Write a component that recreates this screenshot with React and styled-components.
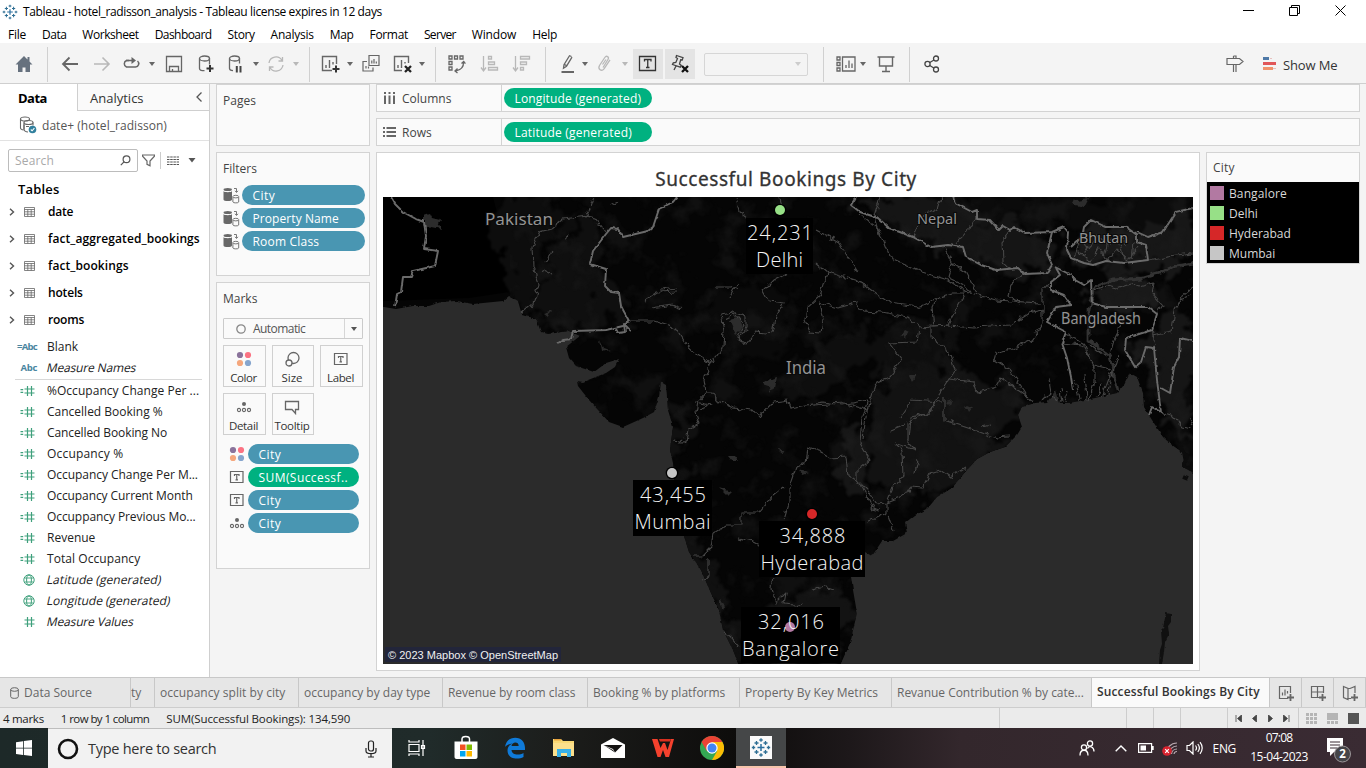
import React, { useLayoutEffect, useRef, useState } from "react";
import styled, { createGlobalStyle, css } from "styled-components";

const ui = `"Open Sans", "Noto Sans", sans-serif`;

const Global = createGlobalStyle`
  * { box-sizing: border-box; }
  html, body { margin: 0; padding: 0; }
  body { width: 1366px; height: 768px; overflow: hidden; font-family: ${ui}; font-size: 12px; color: #222; }
  svg { display: block; flex: none; }
`;

/* ---------- text that tracks itself to a given width ---------- */
const TextSpan = styled.span`
  display: inline-block;
  flex: none;
  white-space: pre;
  padding-top: 1px;
  font-size: ${(p) => p.$size || 12}px;
  font-weight: ${(p) => p.$weight || 400};
  color: ${(p) => p.$color || "inherit"};
  line-height: 16px;
  ${(p) => p.$slanted && css`transform: skewX(-12deg);`}
`;

function Text({ w, children, size, weight, slanted, color }) {
  const ref = useRef(null);
  const [track, setTrack] = useState(0);
  useLayoutEffect(() => {
    if (!w) return;
    const natural = ref.current.offsetWidth;
    setTrack((w - natural) / String(children).length);
  }, [w, children]);
  return (
    <TextSpan ref={ref} style={{ letterSpacing: track }} $size={size} $weight={weight} $slanted={slanted} $color={color}>
      {children}
    </TextSpan>
  );
}

/* ---------- icons ---------- */
const G = "#666";
const L = "#b8b8b8";
const Svg = ({ w = 20, h = 20, children, ...r }) => (
  <svg width={w} height={h} viewBox={`0 0 ${w} ${h}`} fill="none" stroke={G} strokeWidth="1.3" {...r}>
    {children}
  </svg>
);
const Plus = ({ x, y }) => <path d={`M${x - 3.5} ${y}h7M${x} ${y - 3.5}v7`} stroke="#333" strokeWidth="2" />;
const Cross = ({ x, y, c = "#222" }) => (
  <path d={`M${x - 3} ${y - 3}l6 6m0-6l-6 6`} stroke={c} strokeWidth="2.3" />
);
const Caret = ({ c = G, s = 6 }) => (
  <svg width={s} height="4" viewBox="0 0 6 4"><path d="M0 0h6L3 4z" fill={c} /></svg>
);

const icons = {
  home: (
    <Svg stroke="none" fill="#66717e"><path d="M10 2L1.5 10.5H4V18h4.500v-4.500h3V18H16v-7.500h2.500L15.500 7.400V3h-2v2.500z" /></Svg>
  ),
  back: <Svg strokeWidth="1.8"><path d="M18 10H3M9.500 3.500L3 10l6.500 6.500" /></Svg>,
  forward: <Svg stroke={L} strokeWidth="1.6"><path d="M2 10h15M10.500 3.500L17 10l-6.500 6.500" /></Svg>,
  replay: <Svg strokeWidth="1.500"><path d="M8 6.500H5.500a3.500 3.500 0 0 0 0 6.500h9a3.400 3.400 0 0 0 2-6" /><path d="M5 6.500h7" /><path d="M10.500 3l4.500 3.500-4.500 3.500z" fill={G} stroke="none" /></Svg>,
  save: <Svg><path d="M2.500 2.500h15v15h-15zM5.500 17.500v-5h9v5M8.500 15v2.500" /></Svg>,
  dbAdd: <Svg><ellipse cx="8.500" cy="4.500" rx="5" ry="2.500" /><path d="M3.500 4.500v10c0 1.300 2 2.200 5 2.200M13.500 4.500v6" /><Plus x={14} y={14.500} /></Svg>,
  dbPause: <Svg><ellipse cx="8.500" cy="4.500" rx="5" ry="2.500" /><path d="M3.500 4.500v10c0 1.300 1.300 2 3.500 2.200M13.500 4.500v5" /><path d="M10.800 12v6.500M14.500 12v6.500" stroke="#444" strokeWidth="2" /></Svg>,
  refresh: <Svg stroke={L}><path d="M3 9a7 7 0 0 1 13-2.500M17 11a7 7 0 0 1-13 2.500M16.500 3v4h-4M3.500 17v-4h4" /></Svg>,
  sheetAdd: <Svg><path d="M11 16.500H1.500v-14h14V10M5 14v-3M8.500 14V6M12 10.500V8" strokeWidth="1.400" /><Plus x={15} y={15} /></Svg>,
  duplicate: <Svg><path d="M8 1.500h10v10H8zM6 7.500H2v9.500h10v-3.500M5 14.500V12M7.500 14.500v-2M10.800 9.500v-3M13 9.500V5M15.300 9.500v-2" strokeWidth="1.200" /></Svg>,
  clear: <Svg><path d="M9 16.500H1.500v-14h14V9M5 14v-3M8.500 14V6M12 9.500V8" strokeWidth="1.400" /><Cross x={15} y={15} /></Svg>,
  swap: <Svg><path d="M2 2h3v3H2zM7.500 2h3v3h-3zM13 2h3v3h-3zM2 7.500h3v3H2zM2 13h3v3H2zM16.500 8c.3 5-2.500 8-8 9M14.500 9.500l2.200-2 1.700 2.200M10.500 14.500L8 17l2.500 2" /></Svg>,
  sortAsc: <Svg stroke={L}><path d="M3.500 2v14M1 13.500L3.500 17 6 13.500M8.500 2.500h3v2.500h-3zM8.500 8h6v2.500h-6zM8.500 13.500h9V16h-9z" /></Svg>,
  sortDesc: <Svg stroke={L}><path d="M3.500 2v14M1 13.500L3.500 17 6 13.500M8.500 2.500h9V5h-9zM8.500 8h6v2.500h-6zM8.500 13.500h3V16h-3z" /></Svg>,
  pen: <Svg><path d="M13.500 2.500l-2-.8-5.500 9-.5 3.500 3-2 5.500-9M6.300 10.200l2.300 1.600" /><path d="M3.500 18h12.500" strokeWidth="2" /></Svg>,
  clip: <Svg stroke={L}><path d="M8 13.500l5-8c1.500-2.500-1.500-4.500-3.200-2L4.500 11.500c-2 3.500 2 6.500 4.500 3.300l6-9M7.500 10.500l3.500-5" /></Svg>,
  text: <Svg stroke="#333"><path d="M1.500 2.500h16v14h-16zM6.500 7.500v-2h6.500v2M9.750 5.500v8M8 13.500h3.500" /></Svg>,
  pin: <Svg stroke="#444"><path d="M6.500 1.500l6.500 2.200-.8 2.300-1.500-.2-1.200 4.200 1.800 1.500-1 1.700L2.500 10.500l.8-1.600 2.500-.4L7.500 4.500 6 3.500zM6 12L4 16" /><Cross x={15} y={15} c="#111" /></Svg>,
  cards: <Svg><path d="M1 3h3v3H1zM1 8.500h3v3H1zM1 14h3v3H1zM6.500 3H19v14H6.500zM10 14v-3M13 14V6.500M16 14V9.500" /></Svg>,
  present: <Svg><path d="M1.500 3h17M3.500 3.500v8.500h13V3.500M10 12v5M6 17.500h8" strokeWidth="1.400" /></Svg>,
  share: <Svg stroke="#444"><circle cx="5.500" cy="10" r="2.600" /><circle cx="14" cy="4.500" r="2.500" /><circle cx="14" cy="15.500" r="2.500" /><path d="M7.800 8.500L12 6M7.800 11.500l4 2.500" /></Svg>,
  guide: <Svg><path d="M2 4.500h12.500L18 7.500l-3.500 3H2v-6zM8.500 2v2.500M8.500 10.500V18M11 10.500V18M8.500 2H11v2.500" strokeWidth="1.200" /></Svg>,
  showme: (
    <svg width="16" height="16" viewBox="0 0 16 16"><path d="M1 1h6v3H1z" fill="#4e79a7" /><path d="M1 6h13v3H1z" fill="#e15759" /><path d="M1 11h10v3H1z" fill="#f0926b" /><path d="M8 2.500h2M11 12.500h3" stroke="#e8c1bf" /></svg>
  ),
};

const toolbar = [
  ["home", 14], ["sep", 13], ["back", 12], ["forward", 12], ["replay", 9], ["caret", 8], ["save", 9], ["dbAdd", 12],
  ["dbPause", 10], ["caret", 7], ["refresh", 7], ["caretOff", 7], ["sep", 10], ["sheetAdd", 11], ["caret", 6],
  ["duplicate", 8], ["clear", 12], ["caret", 6], ["sep", 10], ["swap", 11], ["sortAsc", 13], ["sortDesc", 12],
  ["sep", 13], ["pen", 12], ["caret", 4], ["clip", 7], ["caretOff", 7], ["text", 5, 1], ["pin", 2, 1], ["select", 9],
  ["sep", 15], ["cards", 12], ["caret", 4], ["present", 10], ["sep", 13], ["share", 12], ["guide", 283], ["showme", 17],
];

/* ---------- window frame ---------- */
const Window = styled.div`width: 1366px; height: 768px; display: flex; flex-direction: column; background: #f4f4f4; overflow: hidden;`;
const TitleBar = styled.header`height: 23px; flex: none; background: #fff; display: flex; align-items: center; padding-left: 2px; gap: 5px; color: #000;`;
const WindowButtons = styled.div`margin-left: auto; display: flex; gap: 35px; padding: 0 20px 2px 0; align-items: center;`;
const MenuBar = styled.nav`height: 20px; flex: none; background: #fff; display: flex; gap: 16px; padding: 2px 0 0 8px; align-items: center; color: #000;`;
const ToolBar = styled.div`height: 41px; flex: none; display: flex; align-items: center; padding-top: 2px; background: #f4f4f4; border-bottom: 1px solid #cfcfcf;`;
const Tool = styled.div`
  margin-left: ${(p) => p.$gap}px; display: flex; align-items: center; justify-content: center; flex: none;
  ${(p) => p.$on && css`width: 30px; height: 30px; background: #e4e4e4;`}
`;
const ToolRule = styled.i`margin-left: ${(p) => p.$gap}px; width: 1px; height: 35px; background: #d0d0d0; flex: none;`;
const FitSelect = styled.div`
  margin-left: ${(p) => p.$gap}px; width: 104px; height: 23px; flex: none; border: 1px solid #d6d6d6; border-radius: 2px;
  display: flex; align-items: center; justify-content: flex-end; padding-right: 5px;
`;
const ShowMe = styled.div`margin-left: 5px; display: flex;`;

/* ---------- data pane ---------- */
const Body = styled.div`height: 593px; flex: none; display: flex;`;
const DataPane = styled.aside`width: 210px; flex: none; background: #fff; border-right: 1px solid #cfcfcf;`;
const PaneTabs = styled.div`height: 27px; display: flex;`;
const PaneTab = styled.div`
  height: 27px; display: flex; align-items: center; color: ${(p) => (p.$active ? "#000" : "#333")};
  ${(p) => p.$active
    ? css`width: 77px; padding-left: 18px;`
    : css`flex: 1; padding: 0 7px 0 12px; justify-content: space-between; background: #fafafa; border-left: 1px solid #cfcfcf; border-bottom: 1px solid #cfcfcf;`}
`;
const SourceRow = styled.div`height: 30px; display: flex; align-items: center; padding: 0 0 1px 19px; gap: 5px; border-bottom: 1px solid #e2e2e2;`;
const SearchRow = styled.div`display: flex; align-items: center; height: 23px; margin: 8px 0 0 8px;`;
const SearchBox = styled.div`
  width: 130px; height: 23px; border: 1px solid #bcbcbc; border-radius: 2px; display: flex; align-items: center;
  justify-content: space-between; padding: 0 6px; margin-right: 4px;
`;
const SearchRule = styled.i`width: 1px; height: 17px; background: #ccc; margin: 0 6px 0 5px;`;
const TablesTitle = styled.div`height: 26px; padding: 6px 0 0 18px; display: flex; align-items: center; color: #000;`;
const TableRow = styled.div`height: 27px; display: flex; align-items: center; color: #000; padding-left: 9px;`;
const TableIcon = styled.div`margin: 1px 13px 0 9px;`;
const FieldList = styled.div`${(p) => p.$top && css`padding-top: ${p.$top}px;`}`;
const FieldRow = styled.div`height: 21px; display: flex; align-items: center; color: #222;`;
const FieldIcon = styled.div`width: 47px; flex: none; display: flex; justify-content: flex-end; padding-right: ${(p) => p.$end}px; color: #4a86a0;`;
const FieldRule = styled.hr`margin: 1px 7px 0 15px; border: 0; border-top: 1px solid #d8d8d8;`;

const Chevron = () => (
  <svg width="6" height="8" viewBox="0 0 6 8" fill="none" stroke="#555" strokeWidth="1.4"><path d="M1 .8L4.500 4 1 7.200" /></svg>
);
const Grid = () => (
  <svg width="11" height="10" viewBox="0 0 11 10" fill="none" stroke="#666"><path d="M.5.500h10v9H.5zM.5 2.500h10M.5 4.800h10M.5 7.200h10M3.800 2.500v7M7.200 2.500v7" strokeWidth=".8" /></svg>
);
const Hash = ({ calc }) => (
  <svg width="15" height="12" viewBox="0 0 15 12" fill="none" stroke="#3fa07c" strokeWidth="1.2">
    <path d="M7.500 1v10M11.500 1v10M4.500 4h10M4.500 8h10" />{calc && <path d="M.5 4.700h2.700M.5 7.300h2.700" />}
  </svg>
);
const Globe = () => (
  <svg width="12" height="12" viewBox="0 0 12 12" fill="none" stroke="#3fa07c"><circle cx="6" cy="6" r="5.200" /><ellipse cx="6" cy="6" rx="2.400" ry="5" /><path d="M1.500 4h9M1.500 8h9" strokeWidth=".9" /></svg>
);

const tables = [["date", 25], ["fact_aggregated_bookings", 152], ["fact_bookings", 81], ["hotels", 35], ["rooms", 36]];
const measures = [
  ["%Occupancy Change Per ...", 152, "calc"], ["Cancelled Booking %", 116, "calc"], ["Cancelled Booking No", 120, "calc"],
  ["Occupancy %", 76, "calc"], ["Occupancy Change Per M...", 151, "calc"], ["Occupancy Current Month", 146, "calc"],
  ["Occuppancy Previous Mo...", 149, "calc"], ["Revenue", 48, "calc"], ["Total Occupancy", 93, "calc"],
  ["Latitude (generated)", 114, "geo"], ["Longitude (generated)", 124, "geo"], ["Measure Values", 87, "num"],
];

/* ---------- shelves ---------- */
const Shelves = styled.section`width: 154px; margin-left: 6px; flex: none; display: flex; flex-direction: column; gap: 6px;`;
const Card = styled.div`height: ${(p) => p.$h}px; background: #fafafa; border: 1px solid #d3d3d3; padding: 0 0 0 6px; color: #444;`;
const CardTitle = styled.div`height: 30px; display: flex; align-items: center;`;
const PillRow = styled.div`display: flex; align-items: center; height: 20px; margin-bottom: 3px; gap: ${(p) => p.$gap}px; padding-left: ${(p) => p.$left || 0}px;`;
const Pill = styled.div`
  width: ${(p) => p.$w}px; height: 20px; border-radius: 10px; background: ${(p) => (p.$green ? "#00b180" : "#4996b2")};
  display: flex; align-items: center; padding-left: 10.500px; color: #fff; flex: none;
`;
const FilterPills = styled.div`padding-top: 2px;`;
const MarkType = styled.div`width: 140px; height: 21px; margin-top: 5px; border: 1px solid #cbcbcb; border-radius: 1px; display: flex; align-items: center; color: #555; padding-left: 12px; gap: 7px;`;
const MarkArrow = styled.div`margin-left: auto; width: 18px; height: 19px; border-left: 1px solid #d6d6d6; display: flex; align-items: center; justify-content: center;`;
const MarkGrid = styled.div`display: grid; grid-template-columns: 43px 42px 43px; column-gap: 6px; row-gap: 6px; margin-top: 6px;`;
const MarkButton = styled.div`
  height: 42px; border: 1px solid #d0d0d0; display: flex; flex-direction: column; align-items: center; justify-content: space-between;
  padding: 5px 2px 0 0; color: #333;
`;
const MarkPills = styled.div`padding-top: 9px;`;

const ColorDots = () => (
  <svg width="16" height="16" viewBox="0 0 16 16"><circle cx="4" cy="4" r="3.100" fill="#8a739b" /><circle cx="12" cy="4" r="3.100" fill="#fb7383" /><circle cx="4" cy="12" r="3.100" fill="#f5a77d" /><circle cx="12" cy="12" r="3.100" fill="#86a5cd" /></svg>
);
const SizeIcon = () => <Svg w={16} h={16}><circle cx="9.500" cy="7" r="5.500" /><circle cx="5" cy="12" r="3" fill="#fafafa" /></Svg>;
const LabelIcon = () => <Svg w={16} h={16}><path d="M1.500 2.500H14v11H1.500zM5.500 7V5.500H10V7M7.750 5.500v5.300M6.500 10.800H9" strokeWidth="1.200" /></Svg>;
const DetailIcon = () => <Svg w={16} h={16} strokeWidth="1.100"><circle cx="8" cy="5" r="2" fill={G} stroke="none" /><circle cx="3" cy="11" r="1.600" /><circle cx="8" cy="11" r="1.600" /><circle cx="13" cy="11" r="1.600" /></Svg>;
const TooltipIcon = () => <Svg w={16} h={16}><path d="M1.500 2.500h13v8h-3v4L8 10.500H1.500z" /></Svg>;
const ContextFilter = () => (
  <svg width="17" height="17" viewBox="0 0 17 17" fill="none" stroke="#777">
    <path d="M.5 4v8.500c0 2 8.500 2 8.500 0V4c0 1.600-8.500 1.600-8.500 0z" fill="#686868" stroke="none" /><ellipse cx="4.750" cy="2.600" rx="4.200" ry="1.500" fill="#686868" stroke="none" />
    <path d="M9.900 10v5c0 1.200 5.800 1.200 5.800 0v-5M11 1.500h2.500v3.500M12 3.800l1.500 1.700L15 3.800" /><ellipse cx="12.800" cy="9.600" rx="2.900" ry="1.300" />
  </svg>
);

/* ---------- worksheet ---------- */
const Work = styled.main`width: 984px; margin-left: 6px; flex: none;`;
const Shelf = styled.div`height: 28px; margin-bottom: 6px; background: #fafafa; border: 1px solid #d3d3d3; display: flex; color: #444;`;
const ShelfName = styled.div`width: 125px; border-right: 1px solid #d3d3d3; display: flex; align-items: center; gap: 6px; padding-left: 6px;`;
const ShelfPills = styled.div`padding: 3px 0 0 2px;`;
const SheetRow = styled.div`display: flex; gap: 6px; align-items: flex-start;`;
const Sheet = styled.div`width: 824px; height: 519px; background: #fff; border: 1px solid #d3d3d3; padding-left: 6px;`;
const SheetTitle = styled.div`height: 44px; width: 806px; padding-top: 6px; display: flex; align-items: center; justify-content: center; color: #333; font-family: "Noto Sans", "Open Sans", sans-serif; -webkit-text-stroke: 0.300px #333;`;
const Legend = styled.div`width: 154px; height: 112px; background: #000; border: 1px solid #d3d3d3;`;
const LegendTitle = styled.div`height: 29px; background: #fafafa; color: #444; padding-left: 6px; display: flex; align-items: center; margin-bottom: 1px;`;
const LegendRow = styled.div`height: 20px; display: flex; align-items: center; gap: 5px; padding-left: 3px; color: #d8d8d8;`;
const Swatch = styled.i`width: 14px; height: 14px; background: ${(p) => p.$c};`;

const LAND =
  "M370 180V307L384 307 396 309 413 306 429 306 441 302 456 301 473 304 503 301 509 296 518 301 522 315 536 319 541 332 548 334 569 331 580 336 566 347 569 358 576 366 594 372 606 363 619 359 615 367 606 373 583 382 577 381 578 386 589 400 609 422 623 427 643 418 654 412 659 397 661 382 666 385 668 410 673 427 670 450 673 463 674 477 679 510 684 536 689 552 701 570 711 593 719 610 723 630 733 650 741 670 H838 L850 643 857 613 853 590 851 577 858 560 865 552 872 556 882 541 893 541 907 533 905 523 915 515 928 508 937 497 952 488 965 472 977 459 990 452 1005 447 1017 435 1022 427 1018 415 1022 407 1035 403 1047 402 1056 390 1060 403 1069 403 1095 398 1117 393 1124 385 1130 373 1137 377 1143 393 1144 407 1152 420 1163 437 1172 445 1182 452 1185 467 1200 480V180Z";

const shades = [
  ["M497 197l45 0 44 20-38 15-14 30 6 34-16 20-20-20 4-40-14-20z", "#0d0d0d"],
  ["M560 232l36-10 12 15-16 22 14 25 24 37-60 10-40-10z", "#0f0f0f"],
  ["M860 197h92l26 22 74 12-4 42-40-4-60-20-90-42z", "#151515"],
  ["M1068 250l22-26 36 4 22 30-70 8z", "#191919"],
  ["M953 197h240v14l-28 20-27 4-14-10-35-4-30 6-80-8z", "#0b0b0b"],
  ["M1137 238l56-30v56l-100 22 0-20 54-6z", "#171717"],
  ["M1092 284l56-6 12 26-12 8-56-8z", "#191919"],
  ["M1152 332l28-22 13 30v100l-28-12-10-50-28-14z", "#161616"],
  ["M890 344l45-4 20 30 45 12 25 20-20 40-40 38-35 14-50-10-20-40 20-40z", "#121212"],
  ["M770 380l60-40 80-20 60 10-30 30-80 8-40 30z", "#0e0e0e"],
  ["M671 398l16 24-2 60 12 60 30 60 22 62h-12l-24-50-24-50-18-60z", "#101010"],
  ["M700 300l60-16 40 30-20 40-40 10-30-30z", "#0a0a0a"],
  ["M780 600l66-16 6 40-30 40h-50z", "#131313"],
  ["M845 420l18 20 6 50-14 20-16-40z", "#161616"],
];

const borders = [
  "M391 197L395 204 403 212 416 219 424 222 426 236 424 249 438 251 435 266 413 271 411 277 403 277 401 292 397 294 395 307",
  "M677 197L673 202 659 209 653 227 648 231 623 237 618 229 611 228 606 234 593 251 590 264 606 269 605 286 611 292 619 293 621 306 629 321 623 326 606 330 573 331 571 339 563 340 558 343",
  "M616 329l2 4 7-1-1-8 7 7",
  "M856 197L851 205 860 212 878 218 889 228 913 237 931 247 948 245 963 247 966 257 981 265 996 270 1018 268 1025 274 1047 273 1052 265 1047 253 1052 232",
  "M953 197L955 203 972 212 977 210 977 219 990 220 999 230 1003 226 1010 230 1014 227 1025 233 1052 232 1064 227 1068 232 1067 250 1071 258 1084 263 1093 265 1106 261 1124 263 1148 260 1146 245 1137 242 1137 235 1126 227 1106 227 1091 220 1084 227 1082 237 1071 247",
  "M1137 232L1148 237 1163 232 1176 212 1193 208",
  "M1055 267L1071 275 1075 280 1084 285 1091 280 1092 303 1106 307 1148 307 1157 314 1152 330 1126 338 1125 350 1135 367 1141 362 1146 347 1154 348 1157 380 1161 412 1152 407 1149 415",
  "M1161 388L1170 393 1174 367 1179 357 1180 338 1193 341",
  "M1056 268L1060 275 1051 282 1051 290 1064 295 1071 305 1056 307 1047 322 1066 332 1062 343 1067 358 1071 377 1073 390",
];

const states = [
  "M594 197L589 211 586 217 596 219 606 232M588 216L563 219 551 229 539 232 532 247 533 267 539 284 533 304 521 314",
  "M629 321L653 321 669 326 678 331 686 344 699 356 711 364 723 347 724 331 721 314 733 312 746 317 746 329 738 339 746 344 756 332 773 334 776 317 784 304 769 302 763 291 773 281 788 273",
  "M726 318l8-4 10 12-6 10M736 197L739 212 746 217M779 197l2 8",
  "M711 360L704 380 706 393 698 402 696 413 699 423 688 430 686 442 673 440M684 438l-6 5 8 0M696 402l14 3-10 4",
  "M706 393L713 393 716 400 733 408 753 410 759 417 773 402 788 400 791 408 806 405 823 402 843 405 867 400",
  "M808 448L823 453 831 458 846 457 848 475 856 480M808 448L806 463 796 467 789 487 789 503 784 520M784 487L774 495 759 513 741 513 741 525 726 525 713 533 711 547 701 557 693 557M708 557L708 577 702 579",
  "M773 577L771 588 776 603 786 593 784 604 796 605 803 603M724 632L732 638 739 647M812 590l12-3 12 2M738 538l14 4 8 4",
  "M816 230L838 242 858 272M858 213L878 228 889 257 922 272 948 280 966 292 996 300 1040 303M944 247L952 263 948 277 964 285 970 292M952 263L966 272 977 292",
  "M816 263L827 272 819 297 808 307 805 320 810 332 821 333 823 320 819 303M827 272L863 283 889 303 919 307 937 298 952 293 966 293 952 317 948 325 974 327 1010 325 1029 313 1043 310",
  "M937 298l-5 10 2 18 14-1M1025 272l-14 12-2 12 12 8M1053 279l-10 12 0 12M1043 303L1043 323 1032 340 1015 348 996 353 994 360 1010 370 1025 393 1032 402",
  "M819 303L838 308 856 303 862 311 882 312 908 317 919 327 917 342 889 343 902 360 889 377 876 383 867 410 845 403 812 405M919 327l29-2M931 327l0 10L948 350 955 370 948 380 937 397 930 413 911 417 909 439",
  "M948 380L974 383 977 392 996 387 1001 378 1029 397M944 397L944 420 974 430 996 438 1008 437M867 410L863 439M910 400l32 2M910 400",
  "M867 400L862 417 860 443 870 460 857 470 857 480 870 493 875 503 887 502 893 488 903 477 902 450 895 443 915 450 908 443 908 423 922 415 932 410 933 400",
  "M857 480l10 16 6 12 8 2M887 502L905 495 910 487 923 488 930 473 940 470 950 477 965 468M887 503L887 513 867 522M888 515L893 530",
  "M913 237l8-20 16-8 4-12M955 245l12-14 8-14M1010 231l-8 10 1 20 8 8M880 197l-6 20 6 20",
  "M1074 257l6-15 10 6 8-12 10 8 12-10 8 12M1078 250l12 12 8-14 10 13 8-12 12 10 10-12",
  "M1090 245l-6 12M1108 240l-4 18M1120 245l4 14M1133 243l-2 16",
  "M1148 260l20-4 25-3M1095 290l12-4 10 3 14-5 8 3 15-4M1154 283l-2 10 11 12-6 9M1193 287l-10 8-8 14-3 22-20 4M1180 300l10-4M1152 330l4 18M1161 412l10 3 12 12 10 2",
  "M1066 335l18 8 10 25M1062 343l20 2 12 20 0 22M1110 355l4-15 10-20M1118 355l-6 20M1094 365l16 4M1112 370l-10 28M1090 345l16 12",
  "M1048 380l2 12-8 8M1052 395l6 6M1060 388l2 14M1067 392l-2 10M1075 380l4 20M1085 375l2 24M1095 380l-6 20M1102 384l-4 14M1110 380l-2 14",
  "M645 300l12-8 20-1M652 308l20-3 10 4M660 290l16-2M715 287l16 0 8-3M729 298l6-12 4 2M610 205l8-4M566 240l2-6M554 250l-8 12M542 270l10 5",
  "M1190 418l3 8M905 425l-14 6M900 418l10-15M990 424l-8 2M918 460l-3 12",
];

const lakes = [
  "M424 216l6-2 2 4 8 2-2 3 4 6-10-2-8 2z", "M764 384l6-5 6-2-2 10-4 6-1-6-6-1z", "M728 456l6 0 4 5-6 0z", "M720 488l12 4-4 4z",
  "M905 330l4 2-4 6-5-2z", "M730 320l8-2 4 10-6 6z", "M1076 200l12-2-4 8-10-2z", "M600 340l4 8 6 2-8 2z", "M720 600l6 6-2 4-4-4z",
  "M964 405l8 3-4 5z", "M945 402l6-2-2 6z", "M910 375l6 0-3 6z", "M780 448l6 4-5 1z", "M544 314l10-3-6 6z", "M800 470l8 4-6 2z",
];

const marks = [
  { x: 780, y: 210, c: "#97e087", bx: 746, by: 218, bw: 67, n: "24,231", nw: 66, city: "Delhi", cw: 47 },
  { x: 672, y: 473, c: "#c6c6c6", bx: 633, by: 480, bw: 79, n: "43,455", nw: 66, city: "Mumbai", cw: 76 },
  { x: 812, y: 514, c: "#d62728", bx: 759, by: 521, bw: 106, n: "34,888", nw: 66, city: "Hyderabad", cw: 103 },
  { x: 790, y: 627, c: "#b279a2", bx: 741, by: 607, bw: 99, n: "32,016", nw: 66, city: "Bangalore", cw: 97 },
];
const countries = [["Pakistan", 485, 225, 68, 17], ["Nepal", 917, 224, 40, 15], ["Bhutan", 1079, 243, 49, 15], ["Bangladesh", 1061, 324, 80, 16], ["India", 786, 374, 40, 17.5]];

function IndiaMap() {
  return (
    <svg width="810" height="467" viewBox="383 197 810 467" fill="none">
      <defs>
        <filter id="rough" x="-5%" y="-5%" width="110%" height="110%" colorInterpolationFilters="sRGB">
          <feTurbulence type="fractalNoise" baseFrequency="0.13" numOctaves="2" seed="4" />
          <feDisplacementMap in="SourceGraphic" scale="7" xChannelSelector="R" yChannelSelector="G" />
        </filter>
        <filter id="coast" x="-5%" y="-5%" width="110%" height="110%" colorInterpolationFilters="sRGB">
          <feTurbulence type="fractalNoise" baseFrequency="0.2" numOctaves="2" seed="9" />
          <feDisplacementMap in="SourceGraphic" scale="3" xChannelSelector="R" yChannelSelector="G" />
        </filter>
        <filter id="hills" x="-10%" y="-10%" width="120%" height="120%" colorInterpolationFilters="sRGB">
          <feTurbulence type="fractalNoise" baseFrequency="0.045" numOctaves="4" seed="12" />
          <feDisplacementMap in="SourceGraphic" scale="50" xChannelSelector="R" yChannelSelector="G" />
          <feGaussianBlur stdDeviation="1.2" />
        </filter>
        <filter id="grain" x="0" y="0" width="100%" height="100%" colorInterpolationFilters="sRGB">
          <feTurbulence type="fractalNoise" baseFrequency="0.035" numOctaves="4" seed="7" />
          <feColorMatrix values="0 0 0 0 .13  0 0 0 0 .13  0 0 0 0 .13  4 0 0 0 -2" />
        </filter>
        <clipPath id="land"><path d={LAND} /></clipPath>
      </defs>
      <path d="M383 197h810v467H383z" fill="#2b2b2b" />
      <path d={LAND} fill="#050505" filter="url(#coast)" />
      <path d="M383 197h110l10 40 6 55-40 6-86 3z" fill="#000" />
      <g clipPath="url(#land)">
        <g filter="url(#hills)">{shades.map(([d, c]) => <path key={d} d={d} fill={c} />)}</g>
        <path d="M510 197h683v467H510z" filter="url(#grain)" opacity=".4" />
      </g>
      <path d="M1166 613l5 1 0 8-3 4 1 8-4 8-1 10-2 12h-3l1-14 2-6-1-14 2-2z" fill="#101010" filter="url(#coast)" />
      <path d="M1180 445l6 10-2 10 6 3 3-6M1183 477l5 2" stroke="#0c0c0c" strokeWidth="4" filter="url(#rough)" />
      <g filter="url(#rough)">
        {lakes.map((d) => <path key={d} d={d} fill="#2c2c2c" />)}
        <path d="M1193 263L1172 267 1160 273 1143 278 1113 280 1095 287 1089 310 1089 340 1110 357 1115 380 1118 392" stroke="#333" strokeWidth="2.800" />
        {states.map((d) => <path key={d} d={d} stroke="#474747" strokeWidth="1.100" />)}
      </g>
      <g filter="url(#coast)">
        {borders.map((d) => <path key={d} d={d} stroke="#6a6a6a" strokeWidth="1.900" strokeLinejoin="round" />)}
      </g>
      <g fontFamily="Noto Sans, sans-serif" fontWeight="400" fill="#939393" stroke="#0a0a0a" strokeWidth="2.200" paintOrder="stroke">
        {countries.map(([name, x, y, w, s]) => (
          <text key={name} x={x} y={y} fontSize={s} textLength={w} lengthAdjust="spacingAndGlyphs">{name}</text>
        ))}
      </g>
      {marks.map((m) => (
        <g key={m.city}>
          <rect x={m.bx} y={m.by} width={m.bw} height="56" fill="#000" />
          <circle cx={m.x} cy={m.y} r="6.300" fill="#000" />
          <circle cx={m.x} cy={m.y} r="5" fill={m.c} />
          <g fontFamily="Open Sans, sans-serif" fontWeight="300" fontSize="20" fill="#f4f4f4">
            <text x={m.bx + (m.bw - m.nw) / 2 + 0.5} y={m.by + 22} textLength={m.nw}>{m.n}</text>
            <text x={m.bx + (m.bw - m.cw) / 2} y={m.by + 49} textLength={m.cw}>{m.city}</text>
          </g>
        </g>
      ))}
      <rect x="385" y="647" width="176" height="15" fill="#22253a" />
      <text x="388" y="659" fontFamily="Liberation Sans, sans-serif" fontSize="11" fill="#f0f0f0" textLength="170">© 2023 Mapbox © OpenStreetMap</text>
    </svg>
  );
}

/* ---------- sheet tabs, status bar ---------- */
const Tabs = styled.div`height: 31px; flex: none; display: flex; background: #e6e6e6; border-top: 1px solid #c8c8c8; border-bottom: 1px solid #cdcdcd;`;
const Tab = styled.div`
  width: ${(p) => p.$w}px; flex: none; height: 29px; border-right: 1px solid #c8c8c8; display: flex; align-items: center; gap: 5px; overflow: hidden;
  padding-left: ${(p) => p.$left}px; color: #666; background: ${(p) => (p.$active ? "#fafafa" : "transparent")};
  ${(p) => p.$active && css`padding-bottom: 3px; color: #333;`}
`;
const Status = styled.div`height: 20px; flex: none; background: #ebebeb; display: flex; color: #222;`;
const StatusText = styled.div`display: flex; gap: 17px; padding-left: 3px; width: 999px; align-items: center;`;
const StatusCell = styled.div`width: ${(p) => p.$w}px; border-left: 1px solid #cdcdcd; display: flex; align-items: center; justify-content: center; padding-right: 1px; gap: ${(p) => p.$gap || 0}px;`;

const sheetTabs = [
  ["ty", 24, 0, 10], ["occupancy split by city", 144, 5, 125], ["occupancy by day type", 144, 5, 126], ["Revenue by room class", 145, 5, 127],
  ["Booking % by platforms", 152, 5, 132], ["Property By Key Metrics", 152, 5, 133], ["Revanue Contribution % by cate...", 200, 5, 187],
];

/* ---------- taskbar ---------- */
const Taskbar = styled.footer`height: 40px; flex: none; display: flex; color: #fff; background: linear-gradient(90deg, #1d2928 0, #202b2a 430px, #1c1d1b 560px, #0d0c0b 740px, #1d181a 850px, #33272c 960px, #3a2b33 1366px);`;
const Start = styled.div`width: 48px; display: flex; align-items: center; justify-content: center;`;
const TaskSearch = styled.div`width: 344px; background: #f2f2f2; border-top: 1px solid #bdbdbd; display: flex; align-items: center; padding: 0 14px 0 9px; color: #333;`;
const TaskSearchText = styled.div`margin: 0 auto 0 9px;`;
const TaskItem = styled.div`
  width: 49.200px; height: 40px; display: flex; align-items: center; justify-content: center; flex: none;
  ${(p) => p.$active && css`background: #454748; border-bottom: 2px solid #f6c4ab;`}
`;
const Tray = styled.div`margin-left: auto; display: flex; align-items: center;`;
const TrayItem = styled.div`margin-right: ${(p) => p.$gap}px; display: flex;`;
const Clock = styled.div`width: 66px; display: flex; flex-direction: column; align-items: center; gap: 2px; margin-right: 14px; padding-bottom: 2px;`;
const Notice = styled.div`width: 33px; height: 40px; margin-right: 7px; padding-top: 2px; display: flex; align-items: center;`;

const TableauMark = ({ s, c = "#2f6f94" }) => (
  <svg width={s} height={s} viewBox="0 0 20 20" fill="none" stroke={c} strokeWidth="1.300">
    <path d="M10 6.500v7M6.500 10h7" stroke="#2a6f9e" strokeWidth="1.500" />
    <path d="M5.500 3.500v4M3.500 5.500h4M14.500 3.500v4M12.500 5.500h4M5.500 12.500v4M3.500 14.500h4M14.500 12.500v4M12.500 14.500h4M10 .8v3.400M8.300 2.500h3.400M10 15.800v3.400M8.300 17.500h3.400M2.500 8.300v3.400M.8 10h3.400M17.500 8.300v3.400M15.800 10h3.400" />
  </svg>
);

const taskIcons = [
  <svg width="18" height="18" viewBox="0 0 18 18" fill="none" stroke="#fff" strokeWidth="1.200"><path d="M1 1v2h10V1M1 17v-2h10v2M1 5.500h10v7H1zM15 1v16M13.500 6.500h3v3h-3z" /></svg>,
  <svg width="24" height="26" viewBox="0 0 24 26"><path d="M8 7V4c0-3.500 7.500-3.500 7.500 0v3" fill="none" stroke="#fff" strokeWidth="1.500" /><path d="M.5 6.500h23V22c0 1-.8 2-2 2h-19c-1 0-2-.8-2-2z" fill="#fff" /><path d="M6 9.500h5.500V15H6z" fill="#f25022" /><path d="M12.500 9.500H18V15h-5.500z" fill="#7fba00" /><path d="M6 16h5.500v5.500H6z" fill="#00a4ef" /><path d="M12.500 16H18v5.500h-5.500z" fill="#ffb900" /></svg>,
  <svg width="22" height="22" viewBox="0 0 22 22"><path d="M1 10C2 3.500 6 .8 11.200.8 17.500.8 21 5.500 21 11v2H7.500c.2 5 7.500 5.800 12 3v4c-6 3.200-16 1.800-16-6.500 0-4 2.500-6 5-7C5 7.200 2.500 8 1 10zm6.500-1h7.200c0-5-6.700-4.500-7.200 0z" fill="#0f7ad8" /></svg>,
  <svg width="22" height="20" viewBox="0 0 22 20"><path d="M0 1h8l2 2h11v15H0z" fill="#f9d975" /><path d="M0 5h21v13H0z" fill="#fce08c" /><path d="M4 11h14v8h-4v-4H8v4H4z" fill="#38b0e8" /><path d="M1 1h7v1.500H1z" fill="#e8a33d" /></svg>,
  <svg width="24" height="21" viewBox="0 0 24 21"><path d="M0 6.500L12 0l12 6.500V20H0z" fill="#fff" /><path d="M2.500 7h19L14 14.500 12 11z" fill="#141312" /><path d="M2.500 7L12 12l2 2.500" fill="#141312" /></svg>,
  <svg width="22" height="20" viewBox="0 0 22 20"><path d="M0 1h5.500l3 9 2.500-5 2 0 2.500 7L19 1h3l-5 18h-3.500L11 12l-2.500 7H5.500z" fill="#f4412d" /><path d="M7 1h12l-1 2.500H8z" fill="#d9301f" /></svg>,
  <svg width="24" height="24" viewBox="0 0 24 24"><circle cx="12" cy="12" r="12" fill="#34a853" /><path d="M12 12L1.600 6A12 12 0 0 1 22.400 6z" fill="#ea4335" /><path d="M12 6h10.400A12 12 0 0 1 12 24l5.200-9z" fill="#fbbc05" /><path d="M1.600 6L6.800 15 12 12V6z" fill="#ea4335" /><circle cx="12" cy="12" r="5.700" fill="#fff" /><circle cx="12" cy="12" r="4.500" fill="#4285f4" /></svg>,
];

const menu = [["File", 18], ["Data", 24], ["Worksheet", 56], ["Dashboard", 57], ["Story", 27], ["Analysis", 43], ["Map", 24], ["Format", 38], ["Server", 32], ["Window", 44], ["Help", 25]];
const legend = [["Bangalore", 58, "#b279a2"], ["Delhi", 29, "#97e087"], ["Hyderabad", 62, "#d62728"], ["Mumbai", 46, "#c6c6c6"]];
const markPills = [[<ColorDots />, "City", 23], [<LabelIcon />, "SUM(Successf..", 90, 1], [<LabelIcon />, "City", 23], [<DetailIcon />, "City", 23]];
const markButtons = [["Color", 27, <ColorDots />], ["Size", 21, <SizeIcon />], ["Label", 27, <LabelIcon />], ["Detail", 29, <DetailIcon />], ["Tooltip", 35, <TooltipIcon />]];

export default function App() {
  return (
    <Window>
      <Global />
      <TitleBar>
        <TableauMark s={16} />
        <Text w={359}>Tableau - hotel_radisson_analysis - Tableau license expires in 12 days</Text>
        <WindowButtons>
          <svg width="11" height="11" viewBox="0 0 11 11"><path d="M0 5.500h11" stroke="#000" /></svg>
          <svg width="11" height="11" viewBox="0 0 11 11" fill="none" stroke="#000"><path d="M.5 2.500h8v8h-8zM2.500 2.500v-2h8v8h-2" /></svg>
          <svg width="11" height="11" viewBox="0 0 11 11" stroke="#000"><path d="M.5.500l10 10m0-10l-10 10" /></svg>
        </WindowButtons>
      </TitleBar>
      <MenuBar>{menu.map(([m, w]) => <Text key={m} w={w}>{m}</Text>)}</MenuBar>
      <ToolBar>
        {toolbar.map(([kind, gap, on], i) => {
          if (kind === "sep") return <ToolRule key={i} $gap={gap} />;
          if (kind === "select") return <FitSelect key={i} $gap={gap}><Caret c="#ccc" s={8} /></FitSelect>;
          if (kind === "caret" || kind === "caretOff") return <Tool key={i} $gap={gap}><Caret c={kind === "caret" ? G : L} /></Tool>;
          return <Tool key={i} $gap={gap} $on={on}>{icons[kind]}</Tool>;
        })}
        <ShowMe><Text w={54} size={13} color="#333">Show Me</Text></ShowMe>
      </ToolBar>

      <Body>
        <DataPane>
          <PaneTabs>
            <PaneTab $active><Text w={29} size={13} weight={700}>Data</Text></PaneTab>
            <PaneTab>
              <Text w={54} size={13}>Analytics</Text>
              <svg width="6" height="10" viewBox="0 0 6 10" fill="none" stroke="#555" strokeWidth="1.300"><path d="M5.500.5L1 5l4.500 4.500" /></svg>
            </PaneTab>
          </PaneTabs>
          <SourceRow>
            <Svg w={18} h={18} strokeWidth="1.100">
              <ellipse cx="6" cy="3" rx="4.500" ry="2" /><path d="M1.500 3v9c0 1 1.500 2 3 2M5 8.500v5M10.500 3v1" /><ellipse cx="9.500" cy="6.500" rx="4.500" ry="2" /><path d="M5 6.500v7c0 1 1.500 2.500 4 2.500M14 6.500v3M7 10.500h3" />
              <circle cx="13.500" cy="13.500" r="3.800" fill="#31809e" stroke="none" /><path d="M11.800 13.500l1.300 1.300 2.300-2.600" stroke="#fff" />
            </Svg>
            <Text w={125} color="#555">date+ (hotel_radisson)</Text>
          </SourceRow>
          <SearchRow>
            <SearchBox>
              <Text w={39} color="#a9a9a9">Search</Text>
              <svg width="11" height="11" viewBox="0 0 11 11" fill="none" stroke="#555" strokeWidth="1.200"><circle cx="6.500" cy="4.200" r="3.400" /><path d="M4 6.800L.8 10.200" /></svg>
            </SearchBox>
            <svg width="13" height="13" viewBox="0 0 13 13" fill="none" stroke="#666" strokeWidth="1.200"><path d="M.6 1h11.800v1.200L8 7v4.800l-3-1.500V7L.6 2.200z" /></svg>
            <SearchRule />
            <svg width="12" height="10" viewBox="0 0 12 10" stroke="#555" strokeWidth="1.200"><path d="M0 1h12M0 3.500h12M0 6h12M0 8.500h12" strokeDasharray="2.500 .7" /></svg>
            <svg width="24" height="5" viewBox="0 0 24 5"><path d="M9.500 0h7L13 4.500z" fill="#555" /></svg>
          </SearchRow>
          <TablesTitle><Text w={41} size={13} weight={600}>Tables</Text></TablesTitle>
          {tables.map(([t, w]) => (
            <TableRow key={t}><Chevron /><TableIcon><Grid /></TableIcon><Text w={w} weight={600}>{t}</Text></TableRow>
          ))}
          <FieldList $top={3}>
            <FieldRow><FieldIcon $end={10}><Text w={20} size={9.5} weight={700}>=Abc</Text></FieldIcon><Text w={31}>Blank</Text></FieldRow>
            <FieldRow><FieldIcon $end={10}><Text w={16} size={9.5} weight={700}>Abc</Text></FieldIcon><Text w={89} slanted>Measure Names</Text></FieldRow>
          </FieldList>
          <FieldRule />
          <FieldList>
            {measures.map(([m, w, k]) => (
              <FieldRow key={m}>
                <FieldIcon $end={12}>{k === "geo" ? <Globe /> : <Hash calc={k === "calc"} />}</FieldIcon>
                <Text w={w} slanted={k !== "calc"}>{m}</Text>
              </FieldRow>
            ))}
          </FieldList>
        </DataPane>

        <Shelves>
          <Card $h={62}><CardTitle><Text w={33}>Pages</Text></CardTitle></Card>
          <Card $h={124}>
            <CardTitle><Text w={34}>Filters</Text></CardTitle>
            <FilterPills>
              {[["City", 23], ["Property Name", 86], ["Room Class", 67]].map(([t, w]) => (
                <PillRow key={t} $gap={2}><ContextFilter /><Pill $w={123}><Text w={w} weight={500}>{t}</Text></Pill></PillRow>
              ))}
            </FilterPills>
          </Card>
          <Card $h={287}>
            <CardTitle><Text w={34}>Marks</Text></CardTitle>
            <MarkType>
              <svg width="10" height="10" viewBox="0 0 10 10"><circle cx="5" cy="5" r="4.200" fill="none" stroke="#888" strokeWidth="1.300" /></svg>
              <Text w={52}>Automatic</Text>
              <MarkArrow><Caret s={8} c="#555" /></MarkArrow>
            </MarkType>
            <MarkGrid>
              {markButtons.map(([t, w, icon]) => <MarkButton key={t}>{icon}<Text w={w} size={11.5}>{t}</Text></MarkButton>)}
            </MarkGrid>
            <MarkPills>
              {markPills.map(([icon, t, w, green], i) => (
                <PillRow key={i} $gap={3} $left={6}>{icon}<Pill $w={111} $green={green}><Text w={w} weight={500}>{t}</Text></Pill></PillRow>
              ))}
            </MarkPills>
          </Card>
        </Shelves>

        <Work>
          <Shelf>
            <ShelfName>
              <svg width="13" height="12" viewBox="0 0 13 12" stroke="#666" strokeWidth="2"><path d="M2 0v2M6.500 0v2M11 0v2M2 3.500V12M6.500 3.500V12M11 3.500V12" /></svg>
              <Text w={49}>Columns</Text>
            </ShelfName>
            <ShelfPills><Pill $w={148} $green><Text w={127} weight={500}>Longitude (generated)</Text></Pill></ShelfPills>
          </Shelf>
          <Shelf>
            <ShelfName>
              <svg width="13" height="12" viewBox="0 0 13 12" stroke="#666" strokeWidth="2"><path d="M0 2h2M0 6h2M0 10h2M3.500 2H13M3.500 6H13M3.500 10H13" /></svg>
              <Text w={30}>Rows</Text>
            </ShelfName>
            <ShelfPills><Pill $w={148} $green><Text w={117} weight={500}>Latitude (generated)</Text></Pill></ShelfPills>
          </Shelf>
          <SheetRow>
            <Sheet>
              <SheetTitle><Text w={262} size={19} weight={400}>Successful Bookings By City</Text></SheetTitle>
              <IndiaMap />
            </Sheet>
            <Legend>
              <LegendTitle><Text w={22}>City</Text></LegendTitle>
              {legend.map(([t, w, c]) => <LegendRow key={t}><Swatch $c={c} /><Text w={w}>{t}</Text></LegendRow>)}
            </Legend>
          </SheetRow>
        </Work>
      </Body>

      <Tabs>
        <Tab $w={131} $left={10}>
          <svg width="9" height="12" viewBox="0 0 9 12" fill="none" stroke="#666"><ellipse cx="4.500" cy="2.500" rx="3.800" ry="1.800" /><path d="M.7 2.500v7.200c0 2.200 7.600 2.200 7.600 0V2.500" /></svg>
          <Text w={68}>Data Source</Text>
        </Tab>
        {sheetTabs.map(([t, w, left, tw]) => <Tab key={t} $w={w} $left={left}><Text w={tw}>{t}</Text></Tab>)}
        <Tab $w={178} $left={5} $active><Text w={163} weight={600}>Successful Bookings By City</Text></Tab>
        <Tab $w={32} $left={8}><Svg w={17} h={16} strokeWidth="1.200"><path d="M10 13.500H1.500V1.500h11V8M4.500 10.500v-3M7 10.500v-6M9.500 8.500V6" /><path d="M9 12.500h7M12.500 9v7" strokeWidth="1.800" /></Svg></Tab>
        <Tab $w={32} $left={8}><Svg w={17} h={16} strokeWidth="1.200"><path d="M9 12.500H1.500V1.500h12V8M7.500 1.500v11M1.500 7h12" /><path d="M9 12.500h7M12.500 9v7" strokeWidth="1.800" /></Svg></Tab>
        <Tab $w={32} $left={8}><Svg w={17} h={16} strokeWidth="1.200"><path d="M1.500 1.500l4.500 2v11l-4.500-2zM6 3.500h2l5-2V8M6 13.500h3" /><path d="M9 12.500h7M12.500 9v7" strokeWidth="1.800" /></Svg></Tab>
      </Tabs>
      <Status>
        <StatusText>
          <Text w={41} size={11.5}>4 marks</Text><Text w={89} size={11.5}>1 row by 1 column</Text><Text w={184} size={11.5}>SUM(Successful Bookings): 134,590</Text>
        </StatusText>
        <StatusCell $w={127} /><StatusCell $w={27} /><StatusCell $w={27} /><StatusCell $w={47} />
        <StatusCell $w={71} $gap={9}>
          {["M1 0v7M6.500 0v7L2.500 3.500z", "M5.500 0v7L1.500 3.500z", "M1.500 0v7l4-3.500z", "M6 0v7M.5 0v7l4-3.500z"].map((d) => (
            <svg key={d} width="7" height="7" viewBox="0 0 7 7"><path d={d} fill="#444" stroke="#444" strokeWidth={d.length > 18 ? 0.8 : 0.2} /></svg>
          ))}
        </StatusCell>
        <StatusCell $w={68} $gap={10}>
          <svg width="11" height="11" viewBox="0 0 11 11"><path d="M0 1.500h11M0 5.500h11M0 9.500h11" stroke="#b5b5b5" strokeWidth="3" strokeDasharray="3 1" /></svg>
          <svg width="11" height="11" viewBox="0 0 11 11"><path d="M0 0h11v7H0z" fill="#b5b5b5" /><path d="M0 9.500h11" stroke="#b5b5b5" strokeWidth="3" strokeDasharray="3 1" /></svg>
          <svg width="11" height="11" viewBox="0 0 11 11"><path d="M0 0h11v11H0z" fill="#555" /></svg>
        </StatusCell>
      </Status>

      <Taskbar>
        <Start><svg width="16" height="16" viewBox="0 0 16 16" fill="#fff"><path d="M0 2.200L7 1.200v6.500H0zM7.800 1.100L16 0v7.700H7.800zM0 8.500h7V15l-7-1zM7.800 8.500H16V16l-8.200-1.100z" /></svg></Start>
        <TaskSearch>
          <svg width="22" height="22" viewBox="0 0 22 22"><circle cx="11" cy="11" r="9" fill="none" stroke="#111" strokeWidth="2.600" /></svg>
          <TaskSearchText><Text w={128} size={14.5}>Type here to search</Text></TaskSearchText>
          <svg width="14" height="18" viewBox="0 0 14 18" fill="none" stroke="#222" strokeWidth="1.200"><rect x="4.500" y="1" width="5" height="10" rx="2" /><path d="M2 8v3c0 3.500 10 3.500 10 0V8M7 13.500V17M4 17h6" /></svg>
        </TaskSearch>
        {taskIcons.map((icon, i) => <TaskItem key={i}>{icon}</TaskItem>)}
        <TaskItem $active><svg width="22" height="23" viewBox="0 0 22 23"><path d="M0 0h22v23H0z" fill="#fafafa" /><g transform="translate(1 1.500)"><TableauMark s={20} /></g></svg></TaskItem>
        <Tray>
          <TrayItem $gap={20}><svg width="16" height="16" viewBox="0 0 16 16" fill="none" stroke="#fff" strokeWidth="1.300"><circle cx="5" cy="7.500" r="2.600" /><circle cx="11" cy="3.500" r="2.600" /><path d="M1 15.500c0-7 8-7 8 0M8.500 8.500c2-3.500 6.500-1.500 6.500 3" /></svg></TrayItem>
          <TrayItem $gap={11}><svg width="12" height="7" viewBox="0 0 12 7" fill="none" stroke="#fff" strokeWidth="1.400"><path d="M.7 6.300L6 1l5.300 5.300" /></svg></TrayItem>
          <TrayItem $gap={8}><svg width="16" height="10" viewBox="0 0 16 10"><path d="M.6.600h13v8.800H.6z" fill="none" stroke="#fff" strokeWidth="1.200" /><path d="M2.500 2.500H8v5H2.500zM14 3h1.700v4H14z" fill="#fff" /></svg></TrayItem>
          <TrayItem $gap={8}><svg width="16" height="15" viewBox="0 0 16 15" fill="none" stroke="#b9a9b0" strokeWidth="1.200"><path d="M4 13A11 11 0 0 1 15 2M7 13a8 8 0 0 1 8-8M9.500 13A5.500 5.500 0 0 1 15 8M12 13a3 3 0 0 1 3-2.500" /><circle cx="5" cy="10" r="4.800" fill="#d8232f" stroke="none" /><path d="M3.200 8.200l3.600 3.600m0-3.600l-3.600 3.600" stroke="#fff" /></svg></TrayItem>
          <TrayItem $gap={10}><svg width="17" height="14" viewBox="0 0 17 14" fill="none" stroke="#fff" strokeWidth="1.200"><path d="M1 4.500h2.500L7 1v12L3.500 9.500H1zM9.500 4.500c1.200 1.500 1.200 3.500 0 5M11.800 3c2 2.500 2 5.500 0 8M14 1.200c2.700 3.500 2.700 8 0 11.600" /></svg></TrayItem>
          <TrayItem $gap={10}><Text w={23}>ENG</Text></TrayItem>
          <Clock><Text w={27}>07:08</Text><Text w={58}>15-04-2023</Text></Clock>
          <Notice>
            <svg width="26" height="30" viewBox="0 0 26 30"><path d="M1 4h16v14H8l-4 4v-4H1z" fill="#fff" /><path d="M4 8h10M4 11h10M4 14h7" stroke="#3a2b33" strokeWidth="1.200" /><circle cx="16.500" cy="20" r="8" fill="#444448" stroke="#9c9699" /><text x="16.500" y="24.200" textAnchor="middle" fontSize="11.500" fontWeight="700" fill="#fff">2</text></svg>
          </Notice>
        </Tray>
      </Taskbar>
    </Window>
  );
}
